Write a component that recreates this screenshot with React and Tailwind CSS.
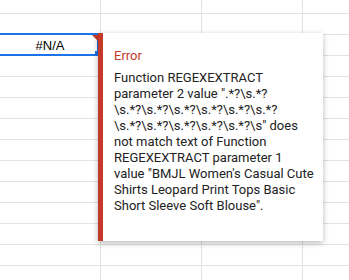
import React from 'react';

const ROWS = 14;

const lines = [
  'Function REGEXEXTRACT',
  'parameter 2 value ".*?\\s.*?',
  '\\s.*?\\s.*?\\s.*?\\s.*?\\s.*?\\s.*?',
  '\\s.*?\\s.*?\\s.*?\\s.*?\\s.*?\\s" does',
  'not match text of Function',
  'REGEXEXTRACT parameter 1',
  "value \"BMJL Women's Casual Cute",
  'Shirts Leopard Print Tops Basic',
  'Short Sleeve Soft Blouse".',
];

function ErrorCell() {
  return (
    <div className="relative w-[101px] shrink-0 border-r border-[#e2e2e2] flex items-center justify-center pt-[1px] text-[13px] text-black font-['Liberation_Sans',Arial,sans-serif]">
      #N/A
      {/* selection outline + fill handle + error marker */}
      <div className="absolute -left-[2px] -top-[2px] -bottom-[1px] right-[1px] border-2 border-[#1a73e8]" />
      <div className="absolute right-[2px] top-0 w-[6px] h-[6px] bg-[#c53929] [clip-path:polygon(0_0,100%_0,100%_100%)]" />
      <div className="absolute right-0 -bottom-[1px] w-[5px] h-[5px] bg-[#1a73e8]" />

      {/* error popup */}
      <div className="absolute left-[98px] -top-[2px] z-10 w-[225px] h-[208px] bg-white border-l-[5px] border-[#c53929] shadow-[0_2px_6px_rgba(0,0,0,0.28)] pl-[11px] pt-[15px] text-left font-['Roboto',Arial,sans-serif] text-[13px] leading-[16px]">
        <div className="text-[#c53929]">Error</div>
        <div className="mt-[6px] text-[#222222] whitespace-nowrap">
          {lines.map((l, i) => (
            <div key={i}>{l}</div>
          ))}
        </div>
      </div>
    </div>
  );
}

export default function App() {
  return (
    <div className="w-[349px] h-[280px] overflow-hidden bg-white">
      <div className="flex flex-col">
        {Array.from({ length: ROWS }).map((_, r) => (
          <div
            key={r}
            className={`relative flex border-b border-[#e2e2e2] ${r === 0 ? 'h-[14px]' : 'h-[21px]'} ${r === 2 ? 'z-10' : ''}`}
          >
            {[0, 1, 2].map((c) =>
              r === 2 && c === 0 ? (
                <ErrorCell key={c} />
              ) : (
                <div key={c} className="w-[101px] shrink-0 border-r border-[#e2e2e2]" />
              )
            )}
            <div className="flex-1" />
          </div>
        ))}
      </div>
    </div>
  );
}
